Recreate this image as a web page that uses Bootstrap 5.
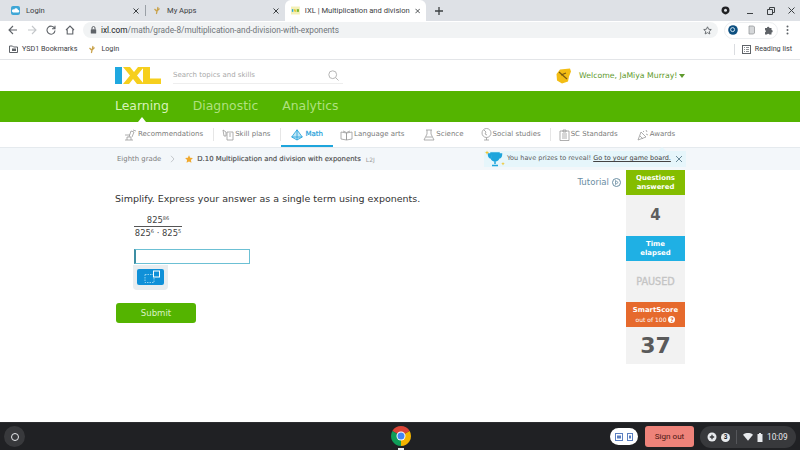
<!DOCTYPE html>
<html lang="en">
<head>
    <meta charset="UTF-8">
    <title>IXL | Multiplication and division with exponents</title>
    <link href="https://cdn.jsdelivr.net/npm/bootstrap@5.3.0/dist/css/bootstrap.min.css" rel="stylesheet">
    <style>
        html, body { margin: 0; width: 800px; height: 450px; overflow: hidden; background: #fff; }
        body { font-family: "DejaVu Sans", sans-serif; display: flex; flex-direction: column; }
        .chrome-text { font-family: Roboto, sans-serif; color: #3c4043; }

        .tab-strip { height: 21px; background: #dee1e6; font-size: 7.6px; }
        .tab-item { height: 21px; flex: none; gap: 6px; padding-right: 6px; }
        .tab-one { width: 145px; padding-left: 11px; }
        .tab-two { width: 139px; padding-left: 7px; }
        .tab-item.active { background: #fff; border-radius: 6px 6px 0 0; width: 141px; padding-left: 6px; gap: 5px; }
        .tab-sep { width: 1px; height: 11px; background: #9aa0a6; flex: none; }
        .tab-title { flex: 1; white-space: nowrap; }
        .win-ctl { gap: 13px; padding-right: 5px; }

        .tool-bar { height: 18px; padding: 0 8px; }
        .tool-gap { margin-left: 9px; }
        .omni-box { width: 635px; height: 16px; margin-left: 8px; background: #f1f3f4; border-radius: 8px; font-size: 8.25px; padding: 0 6px 0 7px; color: #70757a; }
        .omni-box b { font-weight: 400; color: #202124; }
        .ext-pill { width: 54px; height: 17px; border: 1px solid #eceef0; border-radius: 9px; margin-left: 6px; gap: 9px; }
        .tool-menu { margin-left: 8px; }
        .book-bar { height: 21px; padding: 0 8px 0 9px; font-size: 7.2px; border-bottom: 1px solid #e3e5e8; gap: 10px; }
        .book-name { margin-left: -7px; margin-right: 1px; }
        .book-login { margin-left: -5px; }
        .read-sep { background: #dadce0; margin-right: -3px; }
        .read-name { margin-left: -6px; }

        .ixl-head { height: 31px; padding-left: 115px; }
        .ixl-logo { width: 46px; height: 17px; flex: none; }
        .search-box { width: 170px; margin-left: 12px; height: 17px; border-bottom: 1px solid #eee; font-size: 7px; color: #a9a9a9; }
        .welcome-box { margin-left: 213px; font-size: 7.75px; color: #5f9a2d; gap: 7px; }
        .caret-down { width: 0; height: 0; border: 3.5px solid transparent; border-top: 4px solid #5f9a2d; border-bottom: 0; margin-left: -5px; }

        .green-nav { height: 31px; background: #54b400; padding-left: 115px; gap: 24px; font-size: 12.4px; color: #afe17f; position: relative; }
        .green-nav .on { color: #d8f3ba; }
        .nav-notch { position: absolute; left: 138px; bottom: 0; border: 4px solid transparent; border-bottom: 5px solid #fff; border-top: 0; }

        .sub-nav { height: 25px; padding-left: 124px; font-size: 7px; color: #7a7a7a; }
        .sub-item { height: 25px; gap: 1px; flex: none; white-space: nowrap; }
        .sub-item svg { flex: none; }
        .sub-item.on { color: #1e9ed9; border-bottom: 2px solid #1ea5dc; padding: 2px 10px 0; gap: 3px; -webkit-text-stroke: .2px #1e9ed9; }
        .sub-div { width: 1px; height: 13px; background: #e6e6e6; flex: none; }
        .sub-rec { margin-right: 10px; }
        .sub-skill { margin: 0 9px 0 8px; }
        .sub-lang { margin: 0 19px 0 7px; }
        .sub-sci { margin-right: 17px; }
        .sub-soc { margin-right: 9px; }
        .sub-std { margin: 0 19px 0 8px; gap: 1px; }

        .crumb-bar { height: 23px; background: #f3f7fa; border-top: 1px solid #e5eaee; padding-left: 117px; font-size: 6.9px; position: relative; color: #7d7d7d; }
        .crumb-bar b { font-weight: 400; color: #4b4b4b; -webkit-text-stroke: .15px #4b4b4b; }
        .crumb-code { font-size: 6px; color: #9a9a9a; margin-left: 5px; }
        .crumb-arrow { margin: 0 10px 0 9px; }
        .prize-box { position: absolute; left: 484px; top: 3px; width: 202px; height: 16px; background: #e6f6fb; font-size: 6.5px; color: #5b5b5b; padding-left: 23px; white-space: nowrap; }
        .prize-box u { color: #444; }
        .prize-notch { position: absolute; left: 174px; top: -4px; border: 4px solid transparent; border-bottom-color: #e6f6fb; border-top: 0; }
        .prize-cup { position: absolute; left: 1px; top: -1px; }
        .prize-x { position: absolute; left: 191px; top: 4px; }

        .work-area { flex: 1; position: relative; display: flex; padding-left: 115px; }
        .work-main { width: 511px; flex: none; position: relative; }
        .prompt-line { font-size: 9.5px; color: #333; margin-top: 22px; line-height: 14px; }
        .frac-box { margin: 9px 0 0 19px; width: 48px; font-size: 8.4px; color: #444; text-align: center; line-height: 10px; }
        .frac-top { border-bottom: 1px solid #555; padding-bottom: 1px; height: 12px; }
        .frac-bot { padding-top: 1px; white-space: nowrap; }
        .frac-box sup { font-size: 5px; top: -3px; line-height: 0; position: relative; vertical-align: baseline; }
        .answer-input { display: block; width: 116px; height: 15px; margin: 11px 0 0 19px; border: 1px solid #6cc0d4; border-left: 2px solid #3d8ea3; outline: 0; background: #fff; }
        .key-wrap { width: 35px; height: 25px; margin: 1px 0 0 18px; background: #e8edf0; border-radius: 0 0 4px 4px; padding: 4px; }
        .key-btn { width: 27px; height: 16px; background: #0f90d8; border-radius: 2px; display: block; }
        .submit-btn { width: 80px; height: 20px; margin-top: 13px; margin-left: 1px; padding: 0; background: #54b400; border: 0; border-radius: 3px; color: #d9f2c2; font-family: "DejaVu Sans", sans-serif; font-size: 8.6px; line-height: 20px; display: block; }
        .tutorial-link { position: absolute; right: 5px; top: 6px; font-size: 8.6px; color: #6a8ea3; gap: 3px; }

        .score-col { width: 59px; flex: none; background: #f2f2f2; height: 194px; text-align: center; color: #fff; }
        .score-head { font-size: 6.9px; font-weight: 700; line-height: 9px; display: flex; flex-direction: column; justify-content: center; }
        .score-green { height: 25px; background: #84bd00; }
        .score-blue { height: 25px; background: #1fb0e4; }
        .score-orange { height: 25px; background: #e66a2d; }
        .score-orange span { font-weight: 400; font-size: 6px; }
        .score-num { height: 41px; line-height: 41px; font-weight: 700; font-size: 15px; color: #5e5e5e; }
        .score-paused { height: 41px; line-height: 41px; font-size: 9.7px; color: #c4c4c4; -webkit-text-stroke: .3px #c4c4c4; }
        .score-big { height: 37px; line-height: 37px; font-size: 22px; font-weight: 700; color: #5a5a5a; }
        .help-dot { display: inline-block; width: 7px; height: 7px; line-height: 7px; border-radius: 50%; background: #fff; color: #e66a2d; font-size: 6px; font-weight: 700; }

        .shelf-bar { height: 28px; background: #202124; position: relative; border-top: 1px solid #2c2d30; flex: none; }
        .launcher-ring { position: absolute; left: 4px; top: 3px; width: 21px; height: 21px; border-radius: 50%; background: #38393c; display: flex; align-items: center; justify-content: center; }
        .launcher-ring i { width: 8px; height: 8px; border: 1.5px solid #e8eaed; border-radius: 50%; display: block; }
        .chrome-ico { position: absolute; left: 391px; top: 3px; }
        .chrome-dot { position: absolute; left: 398px; top: 25px; width: 6px; height: 1.5px; background: #e8eaed; }
        .pod-pill { position: absolute; left: 610px; top: 5px; width: 28px; height: 17px; border-radius: 9px; background: #fff; }
        .signout-btn { position: absolute; left: 645px; top: 3px; width: 49px; height: 21px; background: #ee837a; border-radius: 3px; font-family: Roboto, sans-serif; font-size: 8.1px; line-height: 21px; text-align: center; color: #4a1512; }
        .status-pod { position: absolute; left: 700px; top: 3px; width: 96px; height: 22px; border-radius: 11px; background: #38393c; font-family: Roboto, sans-serif; font-size: 8.3px; color: #e8eaed; padding-left: 7px; gap: 4px; }
        .status-num { width: 9px; height: 9px; border-radius: 50%; background: #e8eaed; color: #202124; font-size: 6.5px; line-height: 9px; text-align: center; font-weight: 700; }
        .status-sep { width: 1px; height: 14px; background: #55565a; margin: 0 2px; }
    </style>
</head>
<body>
    <div class="tab-strip chrome-text d-flex align-items-center">
        <div class="tab-item tab-one d-flex align-items-center">
            <svg width="9" height="9" viewBox="0 0 9 9"><rect width="9" height="9" rx="2" fill="#3ea6d6"/><path d="M2 6.500h5a1.300 1.300 0 0 0 0-2.600A2 2 0 0 0 3.200 3.400 1.600 1.600 0 0 0 2 6.500z" fill="#fff"/></svg>
            <span class="tab-title">Login</span>
            <svg width="6" height="6" viewBox="0 0 6 6"><path d="m.5.5 5 5M5.500.5l-5 5" stroke="#3c4043" stroke-width="1"/></svg>
        </div>
        <div class="tab-sep"></div>
        <div class="tab-item tab-two d-flex align-items-center">
            <svg width="8" height="9" viewBox="0 0 8 9"><path d="M5 1 3.400 8M1.500 3l2 2M6.500 2.500 4 5" stroke="#c9a24a" stroke-width="1.200" fill="none"/></svg>
            <span class="tab-title">My Apps</span>
            <svg width="6" height="6" viewBox="0 0 6 6"><path d="m.5.5 5 5M5.500.5l-5 5" stroke="#3c4043" stroke-width="1"/></svg>
        </div>
        <div class="tab-item active d-flex align-items-center">
            <svg width="10" height="9" viewBox="0 0 10 9"><rect width="10" height="9" fill="#f4f0b8"/><rect x="1" y="3" width="1.600" height="3" fill="#29a5dd"/><path d="M3 3h2l1 3H4z" fill="#e5c72b"/><rect x="6.500" y="3" width="2.500" height="3" fill="#7cb82f"/></svg>
            <span class="tab-title">IXL | Multiplication and division</span>
            <svg width="6" height="6" viewBox="0 0 6 6"><path d="m.5.5 5 5M5.500.5l-5 5" stroke="#3c4043" stroke-width="1"/></svg>
        </div>
        <svg class="ms-2" width="10" height="10" viewBox="0 0 10 10"><path d="M5 1v8M1 5h8" stroke="#3c4043" stroke-width="1.300"/></svg>
        <div class="win-ctl ms-auto d-flex align-items-center">
            <svg class="me-1" width="9" height="9" viewBox="0 0 9 9"><path d="M4.500.5a4 4 0 0 1 4 4c0 2-2 3.500-4 4-2-.5-4-2-4-4a4 4 0 0 1 4-4z" fill="#202124"/><circle cx="4.500" cy="4.300" r="1.500" fill="#dee1e6"/></svg>
            <svg width="7" height="8" viewBox="0 0 7 8"><path d="M0 6.500h6" stroke="#3c4043" stroke-width="1"/></svg>
            <svg width="8" height="8" viewBox="0 0 8 8"><path d="M.5 2.500h5v5h-5zM2.500 2.500V.5h5v5h-2" stroke="#3c4043" stroke-width="1" fill="none"/></svg>
            <svg width="7" height="7" viewBox="0 0 7 7"><path d="M.5.5l6 6M6.500.5l-6 6" stroke="#3c4043" stroke-width="1"/></svg>
        </div>
    </div>

    <div class="tool-bar chrome-text d-flex align-items-center">
        <svg width="10" height="10" viewBox="0 0 10 10"><path d="M9 5H1.500M5 1 1 5l4 4" stroke="#5f6368" stroke-width="1.100" fill="none"/></svg>
        <svg class="tool-gap" width="10" height="10" viewBox="0 0 10 10"><path d="M1 5h7.500M5 1l4 4-4 4" stroke="#c4c7ca" stroke-width="1.100" fill="none"/></svg>
        <svg class="tool-gap" width="10" height="10" viewBox="0 0 10 10"><path d="M8.600 3.400A4 4 0 1 0 9 5.500M9 .8v3H6" stroke="#5f6368" stroke-width="1.100" fill="none"/></svg>
        <svg class="tool-gap" width="10" height="10" viewBox="0 0 10 10"><path d="M1 5 5 1l4 4M2.200 4.500V9h5.600V4.500" stroke="#5f6368" stroke-width="1.100" fill="none"/></svg>
        <div class="omni-box d-flex align-items-center">
            <svg class="me-1" width="7" height="8" viewBox="0 0 7 8"><rect x=".8" y="3.300" width="5.400" height="4.200" rx=".6" fill="#5f6368"/><path d="M2 3.300V2a1.500 1.500 0 0 1 3 0v1.300" stroke="#5f6368" fill="none"/></svg>
            <span class="flex-grow-1"><b>ixl.com</b>/math/grade-8/multiplication-and-division-with-exponents</span>
            <svg width="9" height="9" viewBox="0 0 10 10"><path d="m5 .9 1.250 2.700 2.950.35-2.200 2 .6 2.900L5 7.400 2.400 8.850l.6-2.900-2.200-2 2.950-.35z" stroke="#5f6368" fill="none"/></svg>
        </div>
        <div class="ext-pill d-flex align-items-center justify-content-center">
            <svg width="10" height="10" viewBox="0 0 10 10"><circle cx="5" cy="5" r="4.800" fill="#0d4f80"/><circle cx="4.600" cy="4.600" r="2" fill="none" stroke="#cfe3f0"/></svg>
            <svg width="8" height="10" viewBox="0 0 8 10"><path d="M2 1h4.500l1 1v6l-1 1H2z" fill="#d5d7d9" stroke="#8e9194" stroke-width=".7"/></svg>
            <svg width="10" height="10" viewBox="0 0 10 10"><path d="M1 3h2a1.200 1.200 0 0 1 2.400 0h2.100v2a1.200 1.200 0 0 1 0 2.400V9.500H5.300a1.200 1.200 0 0 0-2.300 0H1V7.300a1.200 1.200 0 0 0 0-2.300z" fill="#5f6368"/></svg>
        </div>
        <svg class="tool-menu" width="3" height="10" viewBox="0 0 3 10"><circle cx="1.500" cy="1.500" r="1" fill="#5f6368"/><circle cx="1.500" cy="5" r="1" fill="#5f6368"/><circle cx="1.500" cy="8.500" r="1" fill="#5f6368"/></svg>
    </div>

    <div class="book-bar chrome-text d-flex align-items-center">
        <svg width="10" height="8" viewBox="0 0 10 8"><path d="M.5 1h3l1 1h4v5.500h-8z" stroke="#5f6368" fill="none"/><rect x="3" y="3.500" width="4" height="2.500" fill="#5f6368"/></svg>
        <span class="book-name">YSD1 Bookmarks</span>
        <svg width="8" height="9" viewBox="0 0 8 9"><path d="M5 1 3.400 8M1.500 3l2 2M6.500 2.500 4 5" stroke="#c9a24a" stroke-width="1.200" fill="none"/></svg>
        <span class="book-login">Login</span>
        <div class="tab-sep read-sep ms-auto"></div>
        <svg width="9" height="9" viewBox="0 0 9 9"><rect x=".5" y=".5" width="8" height="8" stroke="#5f6368" fill="none"/><path d="M2 2.500h1M4 2.500h3M2 4.500h1M4 4.500h3M2 6.500h1M4 6.500h3" stroke="#5f6368" stroke-width=".7"/></svg>
        <span class="read-name">Reading list</span>
    </div>

    <div class="ixl-head d-flex align-items-center">
        <svg class="ixl-logo" viewBox="0 0 46 17"><rect width="7" height="17" fill="#1fa8e0"/><path d="M8 0h7l4 5 4-5h6l-7 8.500 7 8.500h-7l-4-5-4 5H8l7-8.500z" fill="#f6cf1d"/><path d="M28 0h7v11.500h11V17H28z" fill="#f6cf1d"/></svg>
        <div class="search-box d-flex align-items-center justify-content-between">
            <span>Search topics and skills</span>
            <svg class="me-1" width="11" height="11" viewBox="0 0 11 11"><circle cx="4.700" cy="4.700" r="3.900" stroke="#b5b5b5" fill="none"/><path d="m7.500 7.500 3 3" stroke="#b5b5b5"/></svg>
        </div>
        <div class="welcome-box d-flex align-items-center">
            <svg width="16" height="16" viewBox="0 0 16 16"><path d="M4 1.500 14 .5l1 3-2 5-1 5-6 2-5-3L.5 6z" fill="#f3bd14"/><path d="m3 4 8 7M5 7l5-2" stroke="#7a5a10" stroke-width="1.200"/></svg>
            <span>Welcome, JaMiya Murray!</span>
            <div class="caret-down"></div>
        </div>
    </div>

    <div class="green-nav d-flex align-items-center">
        <span class="on">Learning</span><span>Diagnostic</span><span>Analytics</span>
        <div class="nav-notch"></div>
    </div>

    <div class="sub-nav d-flex align-items-center">
        <div class="sub-item sub-rec d-flex align-items-center">
            <svg width="13" height="12" viewBox="0 0 13 12" fill="none" stroke="#9a9a9a" stroke-width=".8"><path d="M1 11h8M3 11V8h4v3M5 8l2-6 3 1-2 5M1 6h5M9 1l3 1"/></svg>
            <span>Recommendations</span>
        </div>
        <div class="sub-div"></div>
        <div class="sub-item sub-skill d-flex align-items-center">
            <svg width="12" height="12" viewBox="0 0 12 12" fill="none" stroke="#9a9a9a" stroke-width=".8"><path d="M5 3h6v8H5zM7 5h2M7 7h2M1 1l3 2v4H2z"/></svg>
            <span>Skill plans</span>
        </div>
        <div class="sub-div"></div>
        <div class="sub-item on d-flex align-items-center">
            <svg width="12" height="12" viewBox="0 0 12 12" fill="#bfe6f5" stroke="#1e9ed9" stroke-width=".8"><path d="M6 .8 11.300 8 6 11 .7 8zM6 .8V11M.7 8h10.600"/></svg>
            <span>Math</span>
        </div>
        <div class="sub-item sub-lang d-flex align-items-center">
            <svg width="13" height="12" viewBox="0 0 13 12" fill="none" stroke="#9a9a9a" stroke-width=".8"><path d="M1 3l5.500 1v7L1 10zM12 3 6.500 4v7l5.500-1zM3 2l3.500 1.500L10 2"/></svg>
            <span>Language arts</span>
        </div>
        <div class="sub-item sub-sci d-flex align-items-center">
            <svg width="12" height="12" viewBox="0 0 12 12" fill="none" stroke="#9a9a9a" stroke-width=".8"><path d="M3 1h6M4 1v4L1 11h10L8 5V1M3 8h6"/></svg>
            <span>Science</span>
        </div>
        <div class="sub-item sub-soc d-flex align-items-center">
            <svg width="11" height="13" viewBox="0 0 11 13" fill="none" stroke="#9a9a9a" stroke-width=".8"><circle cx="5.500" cy="5" r="4.500"/><path d="M5.500 9.500V12M3 12h5M3 2l2 2-1 2 2 1"/></svg>
            <span>Social studies</span>
        </div>
        <div class="sub-div"></div>
        <div class="sub-item sub-std d-flex align-items-center">
            <svg width="11" height="12" viewBox="0 0 11 12" fill="none" stroke="#9a9a9a" stroke-width=".8"><path d="M1 2h9v9.500H1zM4 1h3v2H4zM3 5h5M3 7h5M3 9h5"/></svg>
            <span>SC Standards</span>
        </div>
        <div class="sub-item d-flex align-items-center">
            <svg width="12" height="12" viewBox="0 0 12 12" fill="none" stroke="#9a9a9a" stroke-width=".8"><path d="M1 11 4 3l5 5zM6 2l1 1M9 1l1 2M9 5l2 1M3 7l3 3"/></svg>
            <span>Awards</span>
        </div>
    </div>

    <div class="crumb-bar d-flex align-items-center">
        <span>Eighth grade</span>
        <svg class="crumb-arrow" width="5" height="8" viewBox="0 0 5 8"><path d="m1 .8 3 3.200-3 3.200" stroke="#c4c8cc" fill="none"/></svg>
        <svg class="me-1" width="8" height="8" viewBox="0 0 10 10"><path d="m5 .3 1.500 3.100 3.400.45-2.500 2.350.65 3.400L5 8 1.950 9.600l.65-3.400L.1 3.850l3.400-.45z" fill="#f0a92e"/></svg>
        <b>D.10 Multiplication and division with exponents</b>
        <span class="crumb-code">L2J</span>
        <div class="prize-box d-flex align-items-center">
            <div class="prize-notch"></div>
            <svg class="prize-cup" width="20" height="18" viewBox="0 0 20 18"><path d="M6 3h8v4a4 4 0 0 1-8 0zM6 4H3.500c0 3 1 4 3 4M14 4h2.500c0 3-1 4-3 4M10 10v4M7 15.500h6" stroke="#1ea5dc" stroke-width="1.500" fill="#1ea5dc"/><path d="m2 .5.600 1.500 1.500.6-1.500.6L2 4.700l-.6-1.500L0 2.600 1.400 2zM18 12l.5 1.300 1.300.5-1.300.5L18 15.600l-.5-1.300-1.300-.5 1.300-.5z" fill="#f0c52e"/></svg>
            <span>You have prizes to reveal! <u>Go to your game board.</u></span>
            <svg class="prize-x" width="8" height="8" viewBox="0 0 8 8"><path d="m1 1 6 6M7 1 1 7" stroke="#5c7f8e" stroke-width=".9"/></svg>
        </div>
    </div>

    <div class="work-area">
        <div class="work-main">
            <div class="prompt-line">Simplify. Express your answer as a single term using exponents.</div>
            <div class="frac-box">
                <div class="frac-top">825<sup>86</sup></div>
                <div class="frac-bot">825<sup>6</sup> · 825<sup>5</sup></div>
            </div>
            <input class="answer-input" type="text" aria-label="answer">
            <div class="key-wrap">
                <span class="key-btn d-flex align-items-center justify-content-center">
                    <svg width="21" height="14" viewBox="0 0 21 14"><rect x="5" y="4.500" width="9" height="8" stroke="#8fd0f0" stroke-dasharray="1.500 1" fill="none"/><rect x="13.500" y="1" width="6" height="6" stroke="#fff" fill="#0f90d8"/></svg>
                </span>
            </div>
            <button class="submit-btn btn" type="button">Submit</button>
            <div class="tutorial-link d-flex align-items-center">
                <span>Tutorial</span>
                <svg width="9" height="9" viewBox="0 0 9 9"><circle cx="4.500" cy="4.500" r="4" stroke="#6a8ea3" fill="none"/><path d="M3.500 2.500 6.200 4.500 3.500 6.500z" fill="none" stroke="#6a8ea3" stroke-width=".8"/></svg>
            </div>
        </div>
        <div class="score-col">
            <div class="score-head score-green">Questions<br>answered</div>
            <div class="score-num">4</div>
            <div class="score-head score-blue">Time<br>elapsed</div>
            <div class="score-paused">PAUSED</div>
            <div class="score-head score-orange">SmartScore<span>out of 100 <i class="help-dot fst-normal">?</i></span></div>
            <div class="score-big">37</div>
        </div>
    </div>

    <div class="shelf-bar">
        <div class="launcher-ring"><i></i></div>
        <svg class="chrome-ico" width="20" height="20" viewBox="0 0 20 20">
            <path d="M10 10 1.340 5A10 10 0 0 1 18.660 5z" fill="#db4437"/>
            <path d="M10 10 18.660 5A10 10 0 0 1 10 20z" fill="#f4b400"/>
            <path d="M10 10 10 20A10 10 0 0 1 1.340 5z" fill="#0f9d58"/>
            <circle cx="10" cy="10" r="4.500" fill="#fff"/><circle cx="10" cy="10" r="3.500" fill="#4285f4"/>
        </svg>
        <div class="chrome-dot"></div>
        <div class="pod-pill d-flex align-items-center justify-content-center gap-1">
            <svg width="8" height="8" viewBox="0 0 8 8"><rect x=".5" y=".5" width="7" height="7" stroke="#5b7fc0" fill="none"/><rect x="2" y="2.500" width="4" height="3" fill="#5b7fc0"/></svg>
            <svg width="6" height="8" viewBox="0 0 6 8"><rect x=".5" y=".5" width="5" height="7" stroke="#5b7fc0" fill="none"/><rect x="2" y="2.500" width="2" height="3" fill="#5b7fc0"/></svg>
        </div>
        <div class="signout-btn">Sign out</div>
        <div class="status-pod d-flex align-items-center">
            <svg width="10" height="10" viewBox="0 0 10 10"><circle cx="5" cy="5" r="4.500" fill="#e8eaed"/><path d="M5 2.800v4.400M2.800 5h4.400" stroke="#38393c" stroke-width="1.300"/></svg>
            <div class="status-num">3</div>
            <div class="status-sep"></div>
            <svg width="10" height="8" viewBox="0 0 10 8"><path d="M0 1.800a7.500 7.500 0 0 1 10 0L5 7.800z" fill="#e8eaed"/></svg>
            <svg width="6" height="9" viewBox="0 0 6 9"><path d="M2 0h2v1h1.500v8h-5V1H2z" fill="#e8eaed"/></svg>
            <span>10:09</span>
        </div>
    </div>
</body>
</html>
